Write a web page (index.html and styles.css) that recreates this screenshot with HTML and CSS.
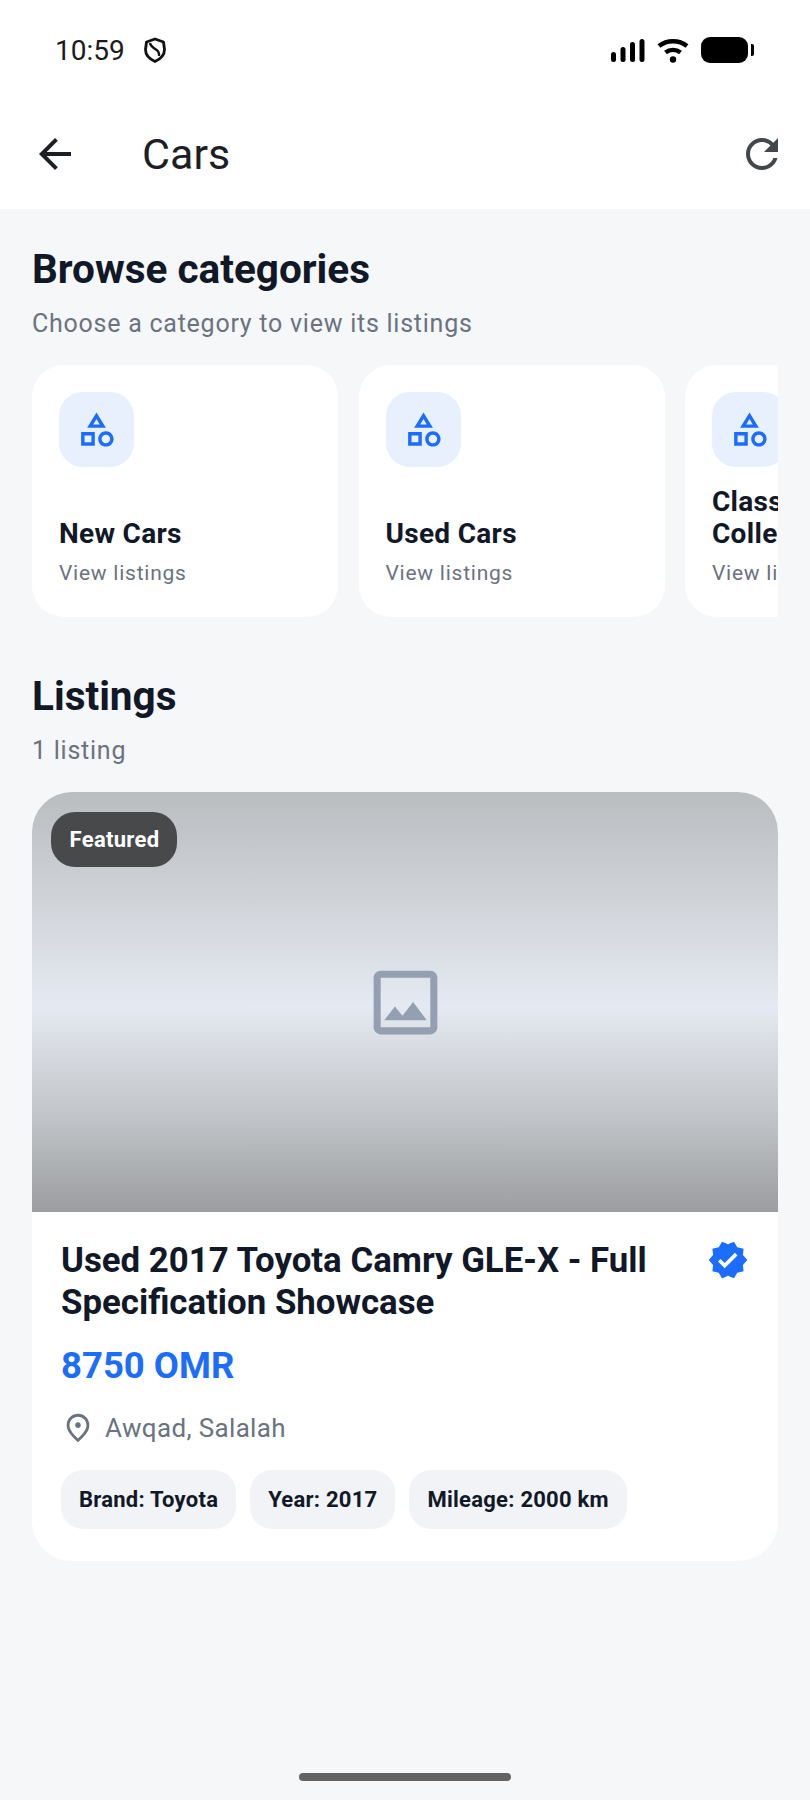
FILE: index.html
```html
<!DOCTYPE html>
<html lang="en">
<head>
  <meta charset="UTF-8">
  <meta name="viewport" content="width=device-width, initial-scale=1.0">
  <title>Cars</title>
  <link rel="stylesheet" href="styles.css">
</head>
<body>
  <header class="top">
    <div class="status">
      <div class="status-left">
        <span class="time">10:59</span>
        <svg class="shield" viewBox="0 0 24 26"><path d="M3.500 5 12 2l8.500 3 1 7.500c0 5-4 9.500-9.500 12C6.500 22 2.500 17.500 2.500 12.500z" fill="none" stroke="#111" stroke-width="2.800" stroke-linejoin="round"/><path d="M7 6c.5 3 3 4.500 6 6.500 2.500 1.700 3.500 3.500 3 6.500" fill="none" stroke="#111" stroke-width="2.400"/></svg>
      </div>
      <div class="status-right">
        <svg class="signal" viewBox="0 0 34 24"><g fill="#000"><rect x="0" y="14" width="5" height="10" rx="2.500"/><rect x="9.500" y="9" width="5" height="15" rx="2.500"/><rect x="19" y="4" width="5" height="20" rx="2.500"/><rect x="28.500" y="1" width="5" height="23" rx="2.500"/></g></svg>
        <svg class="wifi" viewBox="0 0 32 26"><g fill="none" stroke="#000" stroke-width="4.500"><path d="M2 9c8-6.500 20-6.500 28 0"/><path d="M8.500 15.500c4.500-3.500 10.500-3.500 15 0"/></g><circle cx="16" cy="22.500" r="3.200" fill="#000"/></svg>
        <div class="battery"><span class="battery-body"></span><span class="battery-tip"></span></div>
      </div>
    </div>
    <div class="appbar">
      <svg class="icon-back" viewBox="0 0 24 24"><path d="M20 11H7.830l5.590-5.590L12 4l-8 8 8 8 1.410-1.410L7.830 13H20v-2z"/></svg>
      <h1 class="appbar-title">Cars</h1>
      <div class="refresh-clip">
        <svg class="icon-refresh" viewBox="0 0 24 24"><path d="M17.650 6.350C16.200 4.900 14.210 4 12 4c-4.420 0-7.990 3.580-7.990 8s3.570 8 7.990 8c3.730 0 6.840-2.550 7.730-6h-2.080c-.82 2.330-3.040 4-5.650 4-3.310 0-6-2.690-6-6s2.690-6 6-6c1.660 0 3.140.69 4.220 1.780L13 11h7V4l-2.350 2.350z"/></svg>
      </div>
    </div>
  </header>

  <main class="content">
    <h2 class="section-title">Browse categories</h2>
    <p class="section-sub">Choose a category to view its listings</p>

    <div class="categories">
      <div class="cat-card">
        <div class="cat-icon"><svg viewBox="0 0 24 24"><path d="M12 2l-5.500 9h11L12 2zm0 3.840L13.930 9h-3.870L12 5.840zM17.500 13c-2.490 0-4.500 2.010-4.500 4.500s2.010 4.500 4.500 4.500 4.500-2.010 4.500-4.500-2.010-4.500-4.500-4.500zm0 7c-1.380 0-2.500-1.120-2.500-2.500s1.120-2.500 2.500-2.500 2.500 1.120 2.500 2.500-1.120 2.500-2.500 2.500zM3 21.500h8v-8H3v8zm2-6h4v4H5v-4z"/></svg></div>
        <div class="cat-name">New Cars</div>
        <div class="cat-link">View listings</div>
      </div>
      <div class="cat-card">
        <div class="cat-icon"><svg viewBox="0 0 24 24"><path d="M12 2l-5.500 9h11L12 2zm0 3.840L13.930 9h-3.870L12 5.840zM17.500 13c-2.490 0-4.500 2.010-4.500 4.500s2.010 4.500 4.500 4.500 4.500-2.010 4.500-4.500-2.010-4.500-4.500-4.500zm0 7c-1.380 0-2.500-1.120-2.500-2.500s1.120-2.500 2.500-2.500 2.500 1.120 2.500 2.500-1.120 2.500-2.500 2.500zM3 21.500h8v-8H3v8zm2-6h4v4H5v-4z"/></svg></div>
        <div class="cat-name">Used Cars</div>
        <div class="cat-link">View listings</div>
      </div>
      <div class="cat-card">
        <div class="cat-icon"><svg viewBox="0 0 24 24"><path d="M12 2l-5.500 9h11L12 2zm0 3.840L13.930 9h-3.870L12 5.840zM17.500 13c-2.490 0-4.500 2.010-4.500 4.500s2.010 4.500 4.500 4.500 4.500-2.010 4.500-4.500-2.010-4.500-4.500-4.500zm0 7c-1.380 0-2.500-1.120-2.500-2.500s1.120-2.500 2.500-2.500 2.500 1.120 2.500 2.500-1.120 2.500-2.500 2.500zM3 21.500h8v-8H3v8zm2-6h4v4H5v-4z"/></svg></div>
        <div class="cat-name">Classic Collectibles</div>
        <div class="cat-link">View listings</div>
      </div>
    </div>

    <h2 class="section-title listings-title">Listings</h2>
    <p class="section-sub">1 listing</p>

    <article class="listing">
      <div class="listing-image">
        <span class="badge">Featured</span>
        <svg class="placeholder" viewBox="0 0 24 24"><path d="M19 5v14H5V5h14m0-2H5c-1.100 0-2 .9-2 2v14c0 1.100.9 2 2 2h14c1.100 0 2-.9 2-2V5c0-1.100-.9-2-2-2zm-4.860 8.860l-3 3.870L9 13.140 6 17h12l-3.860-5.140z"/></svg>
      </div>
      <div class="listing-body">
        <div class="listing-head">
          <h3 class="listing-title">Used 2017 Toyota Camry GLE-X - Full Specification Showcase</h3>
          <svg class="verified" viewBox="0 0 24 24"><path d="M23 12l-2.440-2.790.34-3.690-3.610-.82-1.890-3.200L12 2.960 8.600 1.500 6.710 4.690 3.100 5.500l.34 3.700L1 12l2.440 2.790-.34 3.700 3.610.82L8.600 22.500l3.400-1.470 3.400 1.460 1.890-3.190 3.610-.82-.34-3.690L23 12zm-12.910 4.720l-3.800-3.810 1.480-1.480 2.320 2.330 5.850-5.870 1.480 1.480-7.330 7.350z"/></svg>
        </div>
        <div class="price">8750 OMR</div>
        <div class="location">
          <svg class="pin" viewBox="0 0 24 24"><path d="M12 12c-1.100 0-2-.9-2-2s.9-2 2-2 2 .9 2 2-.9 2-2 2zm6-1.800C18 6.570 15.350 4 12 4s-6 2.570-6 6.200c0 2.340 1.950 5.440 6 9.140 4.050-3.700 6-6.800 6-9.140zM12 2c4.200 0 8 3.220 8 8.200 0 3.320-2.670 7.250-8 11.800-5.330-4.550-8-8.480-8-11.800C4 5.220 7.800 2 12 2z"/></svg>
          <span>Awqad, Salalah</span>
        </div>
        <div class="chips">
          <span class="chip">Brand: Toyota</span>
          <span class="chip">Year: 2017</span>
          <span class="chip">Mileage: 2000 km</span>
        </div>
      </div>
    </article>
  </main>

  <div class="home-bar"><span class="home-indicator"></span></div>
</body>
</html>
```

FILE: styles.css
```css
* {
  box-sizing: border-box;
}
body {
  margin: 0;
  width: 810px;
  height: 1800px;
  overflow: hidden;
  display: flex;
  flex-direction: column;
  font-family: Roboto, "Liberation Sans", sans-serif;
  background-color: #f5f7f9;
  color: #111827;
}
h1, h2, h3, p {
  margin: 0;
}

/* status bar + app bar */
.top {
  height: 209px;
  background: #fff;
  flex: none;
}
.status {
  height: 100px;
  padding: 0 56px 0 55px;
  display: flex;
  justify-content: space-between;
  align-items: center;
}
.status-left, .status-right {
  display: flex;
  align-items: center;
}
.time {
  font-size: 28px;
  color: #1b1b1b;
}
.shield {
  width: 24px;
  height: 26px;
  margin-left: 18px;
}
.signal {
  width: 34px;
  height: 24px;
}
.wifi {
  width: 32px;
  height: 26px;
  margin-left: 12px;
}
.battery {
  display: flex;
  align-items: center;
  margin-left: 12px;
}
.battery-body {
  width: 47px;
  height: 26px;
  background: #000;
  border-radius: 9px;
}
.battery-tip {
  width: 3px;
  height: 12px;
  margin-left: 3px;
  background: #000;
  border-radius: 0 2px 2px 0;
}
.appbar {
  height: 107px;
  padding: 0 32px 0 31px;
  display: flex;
  align-items: center;
}
.icon-back {
  width: 48px;
  height: 48px;
  fill: #1c2025;
  flex: none;
}
.appbar-title {
  margin-left: 63px;
  flex: 1;
  font-size: 43px;
  font-weight: 400;
  color: #1c2025;
}
.refresh-clip {
  width: 40px;
  height: 48px;
  overflow: hidden;
}
.icon-refresh {
  width: 48px;
  height: 48px;
  fill: #42474a;
}

/* page content */
.content {
  flex: 1;
  padding: 38px 32px 0;
}
.section-title {
  font-size: 40.500px;
  line-height: 44px;
  font-weight: 700;
  color: #111827;
}
.section-sub {
  margin-top: 18px;
  font-size: 25px;
  line-height: 30px;
  letter-spacing: 0.75px;
  color: #6b7280;
}
.categories {
  display: flex;
  gap: 20.500px;
  margin-top: 26px;
  overflow: hidden;
}
.cat-card {
  flex: none;
  width: 306px;
  height: 252px;
  padding: 27px 27px 30px;
  background: #fff;
  border-radius: 32px;
  display: flex;
  flex-direction: column;
}
.cat-icon {
  width: 75px;
  height: 75px;
  flex: none;
  background: #e8f0fe;
  border-radius: 24px;
  display: flex;
  align-items: center;
  justify-content: center;
  margin-bottom: auto;
}
.cat-icon svg {
  width: 41px;
  height: 41px;
  fill: #1c6dfb;
}
.cat-name {
  font-size: 28px;
  line-height: 32px;
  letter-spacing: 0.3px;
  font-weight: 700;
  color: #111827;
}
.cat-link {
  margin-top: 9px;
  font-size: 21px;
  line-height: 28px;
  letter-spacing: 0.75px;
  color: #6b7280;
}
.listings-title {
  margin-top: 57px;
}

/* listing card */
.listing {
  margin-top: 26px;
  background: #fff;
  border-radius: 40px;
  overflow: hidden;
}
.listing-image {
  position: relative;
  height: 420px;
  display: flex;
  align-items: center;
  justify-content: center;
  background: linear-gradient(180deg, #b9bdc0 0%, #cfd3d8 25%, #e5e9f1 51%, #c3c6ca 76%, #9b9da0 100%);
}
.badge {
  position: absolute;
  left: 19px;
  top: 20px;
  width: 126px;
  height: 55px;
  padding-left: 1px;
  border-radius: 24px;
  background: #47494b;
  color: #fff;
  font-size: 22px;
  letter-spacing: 0.3px;
  font-weight: 700;
  display: flex;
  align-items: center;
  justify-content: center;
}
.placeholder {
  width: 85px;
  height: 85px;
  fill: #94a0b2;
}
.listing-body {
  padding: 27px 29px 32px;
}
.listing-head {
  display: flex;
  align-items: flex-start;
  gap: 20px;
}
.listing-title {
  flex: 1;
  font-size: 34.800px;
  line-height: 42px;
  font-weight: 700;
  color: #111827;
}
.verified {
  flex: none;
  width: 42px;
  height: 42px;
  fill: #1c6dfb;
}
.price {
  margin-top: 21px;
  font-size: 36.500px;
  line-height: 44px;
  font-weight: 700;
  color: #1c6dfb;
}
.location {
  margin-top: 23px;
  display: flex;
  align-items: center;
  gap: 10px;
  font-size: 26px;
  line-height: 34px;
  letter-spacing: 0.35px;
  color: #6b7280;
}
.pin {
  width: 34px;
  height: 34px;
  fill: #6b7280;
}
.chips {
  margin-top: 25px;
  display: flex;
  gap: 14px;
}
.chip {
  height: 59px;
  padding: 0 18px;
  display: flex;
  align-items: center;
  background: #f1f3f7;
  border-radius: 22px;
  font-size: 22px;
  letter-spacing: 0.25px;
  font-weight: 700;
  color: #111827;
}

/* gesture bar */
.home-bar {
  height: 110px;
  flex: none;
  display: flex;
  justify-content: center;
  padding-top: 83px;
}
.home-indicator {
  width: 212px;
  height: 8px;
  border-radius: 4px;
  background: #636363;
}
```
